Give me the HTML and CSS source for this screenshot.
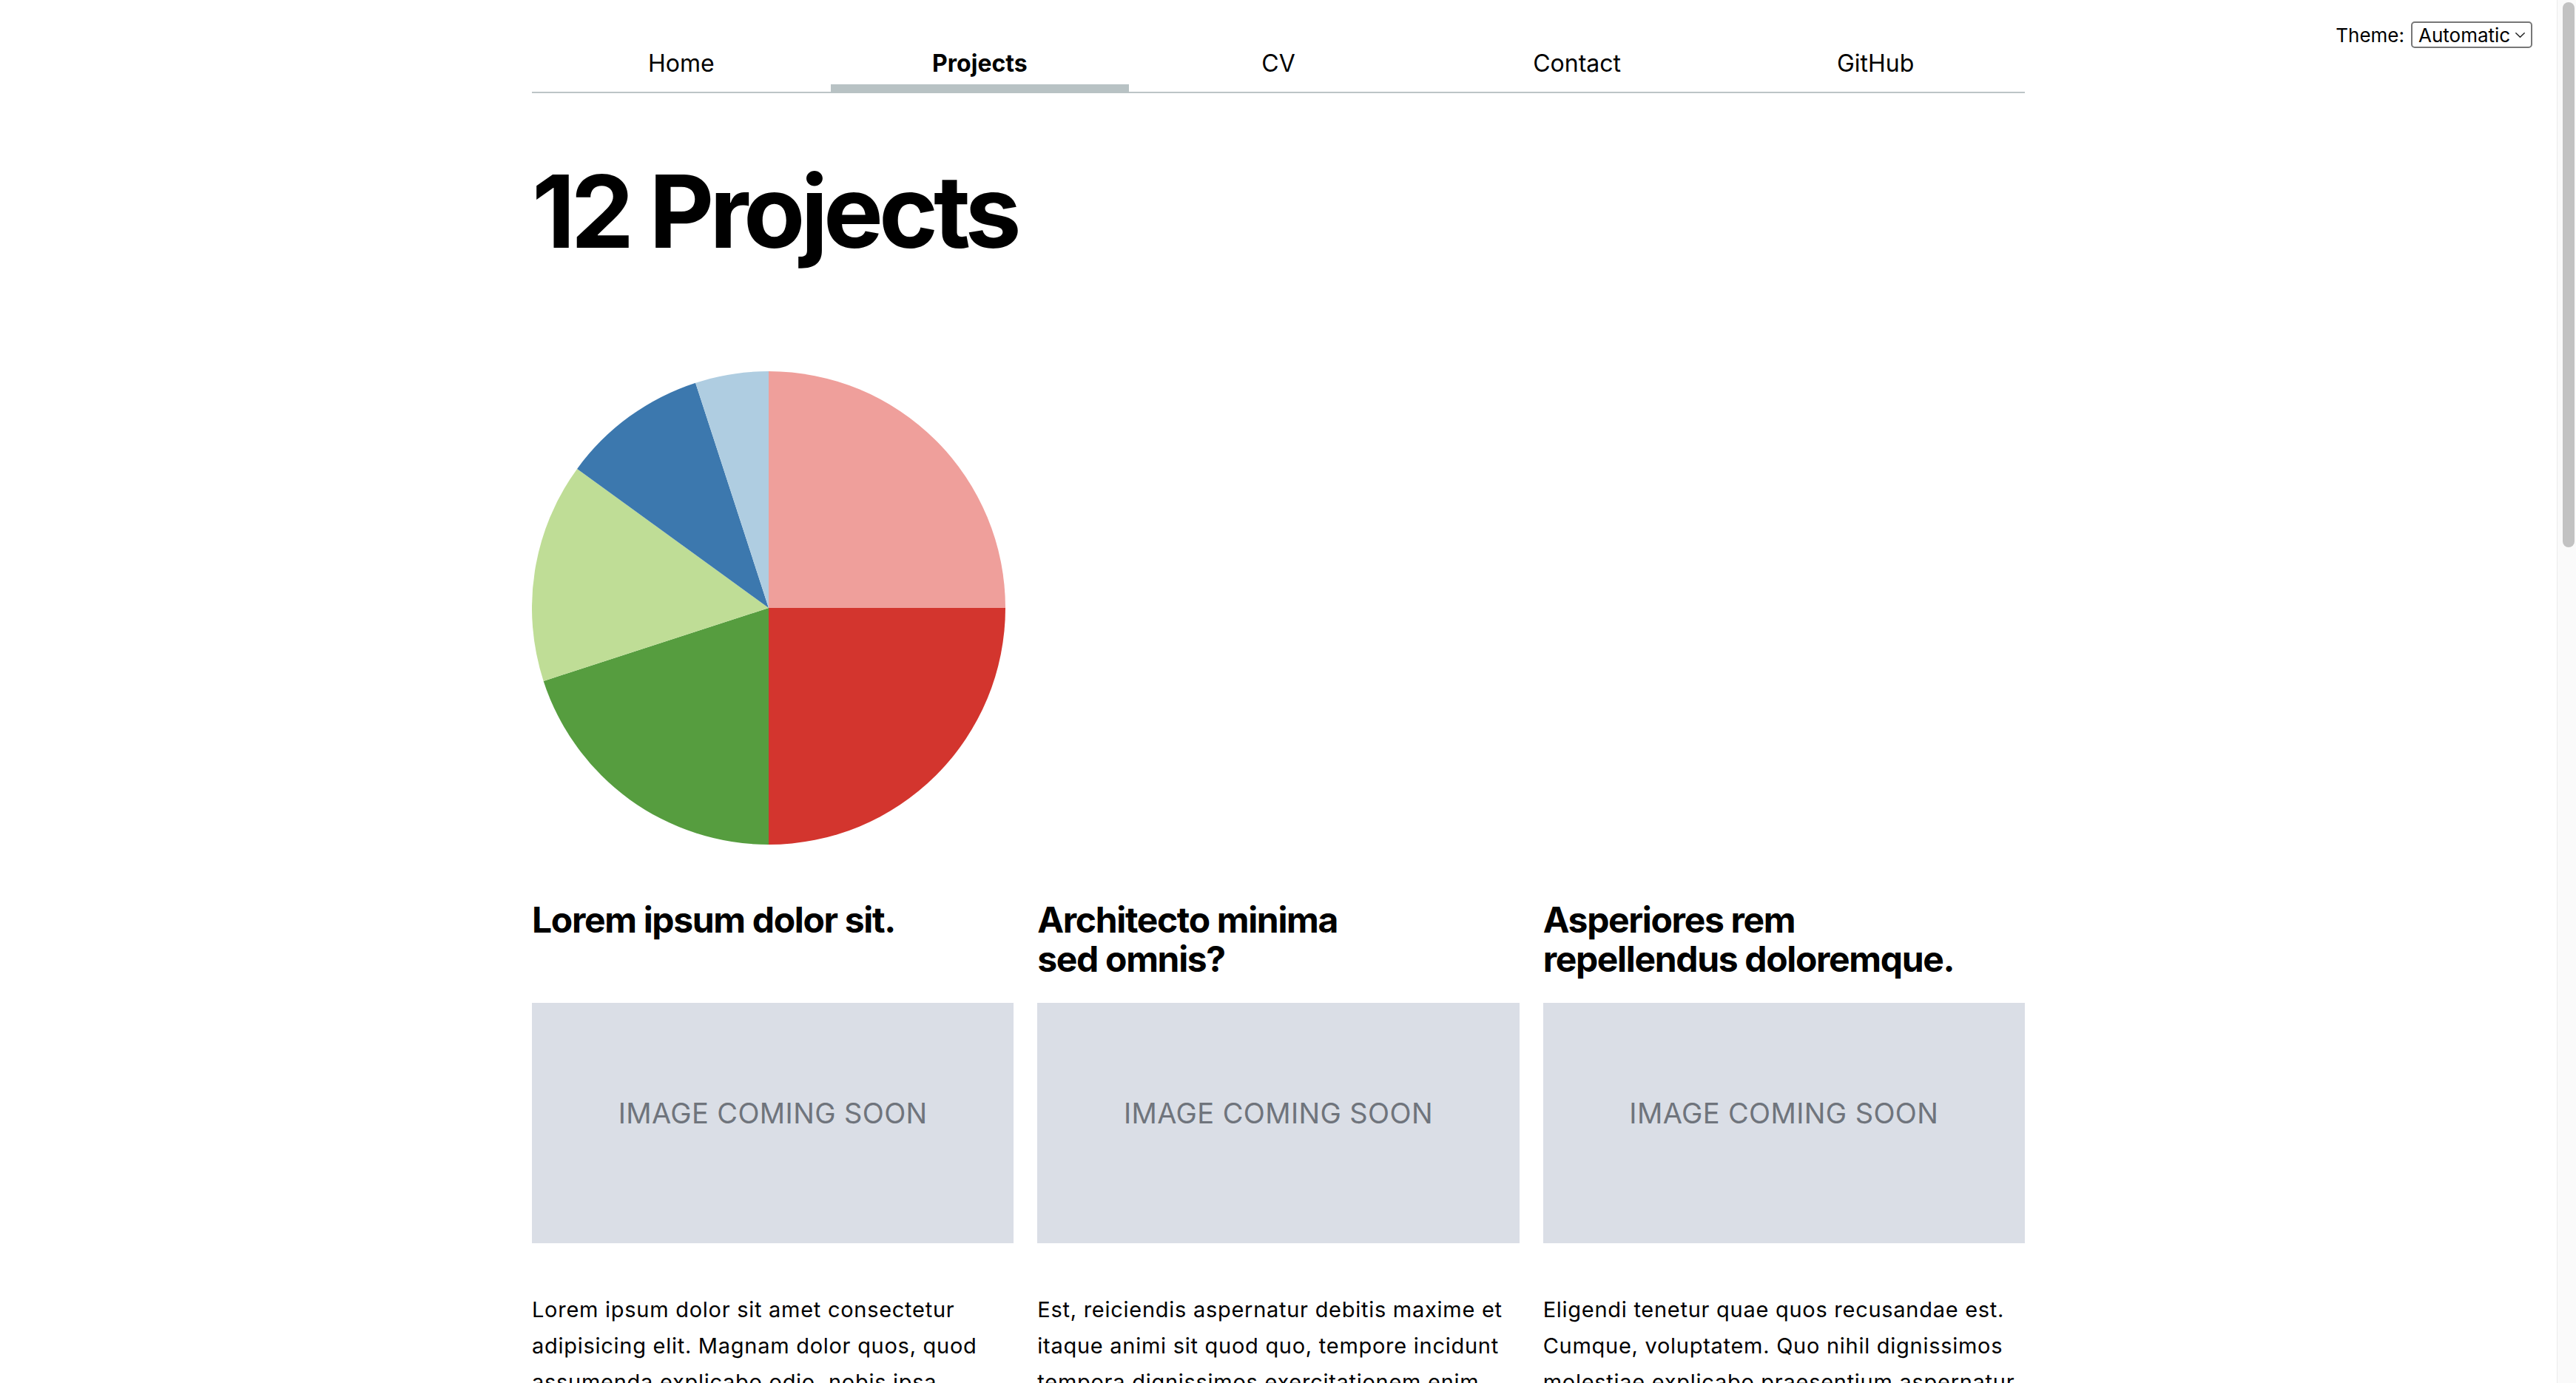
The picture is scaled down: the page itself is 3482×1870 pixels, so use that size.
FILE: index.html
```html
<!DOCTYPE html>
<html lang="en">
<head>
<meta charset="utf-8">
<title>Projects</title>
<link rel="stylesheet" href="styles.css">
</head>
<body>
<div class="page">
  <div class="theme">
    <label for="theme">Theme:</label>
    <span class="select-wrap">
      <select id="theme"><option>Automatic</option><option>Light</option><option>Dark</option></select>
      <svg class="chev" viewBox="0 0 13 7" aria-hidden="true"><path d="M0.8 0.8 L6.5 6.2 L12.2 0.8" fill="none" stroke="#222" stroke-width="1.5" stroke-linecap="round" stroke-linejoin="round"/></svg>
    </span>
  </div>
  <div class="container">
    <nav class="nav">
      <a href="#">Home</a>
      <a href="#" class="active">Projects</a>
      <a href="#">CV</a>
      <a href="#">Contact</a>
      <a href="#">GitHub</a>
    </nav>
    <h1 class="title">12 Projects</h1>
    <svg class="pie" viewBox="0 0 640 640" aria-label="Projects by year">
      <path d="M320 320 L320 0 A320 320 0 0 1 640 320 Z" fill="#ef9f9b"/>
      <path d="M320 320 L640 320 A320 320 0 0 1 320 640 Z" fill="#d3352e"/>
      <path d="M320 320 L320 640 A320 320 0 0 1 15.66 418.89 Z" fill="#569d3f"/>
      <path d="M320 320 L15.66 418.89 A320 320 0 0 1 61.11 131.91 Z" fill="#bfdd96"/>
      <path d="M320 320 L61.11 131.91 A320 320 0 0 1 221.11 15.66 Z" fill="#3c78ae"/>
      <path d="M320 320 L221.11 15.66 A320 320 0 0 1 320 0 Z" fill="#afcde1"/>
    </svg>
    <section class="cards">
      <article class="card">
        <h2 class="card-title">Lorem ipsum dolor sit.</h2>
        <div class="card-img">IMAGE COMING SOON</div>
        <p class="card-text">Lorem ipsum dolor sit amet consectetur adipisicing elit. Magnam dolor quos, quod assumenda explicabo odio, nobis ipsa laudantium quas eum veritatis ullam sint porro minima modi molestias doloribus cumque odit.</p>
      </article>
      <article class="card">
        <h2 class="card-title">Architecto minima sed omnis?</h2>
        <div class="card-img">IMAGE COMING SOON</div>
        <p class="card-text">Est, reiciendis aspernatur debitis maxime et itaque animi sit quod quo, tempore incidunt tempora dignissimos exercitationem enim voluptates, officiis nulla ratione cupiditate harum nesciunt.</p>
      </article>
      <article class="card">
        <h2 class="card-title">Asperiores rem repellendus doloremque.</h2>
        <div class="card-img">IMAGE COMING SOON</div>
        <p class="card-text">Eligendi tenetur quae quos recusandae est. Cumque, voluptatem. Quo nihil dignissimos molestiae explicabo praesentium aspernatur voluptas accusamus quidem, sapiente libero quas.</p>
      </article>
    </section>
  </div>
</div>
<div class="scrollbar"><div class="thumb"></div></div>
</body>
</html>
```

FILE: styles.css
```css
html {
  overflow: hidden;
}

body {
  margin: 0;
  display: flex;
  font-family: Inter, "Noto Sans", "Liberation Sans", sans-serif;
  color: #000;
  background: #fff;
}

.page {
  flex: 1;
  min-width: 0;
  position: relative;
}

.scrollbar {
  flex: none;
  width: 26px;
  height: 100vh;
  box-sizing: border-box;
  background: #fafafa;
  border-left: 1px solid #ebebeb;
}

.thumb {
  margin: 3px 2px 0 7px;
  height: 737px;
  background: #c2c2c2;
  border-radius: 8px;
}

.theme {
  position: absolute;
  top: 29px;
  right: 33px;
  display: flex;
  align-items: center;
  gap: 9px;
  font-size: 26px;
}

.select-wrap {
  position: relative;
  display: block;
}

.theme select {
  appearance: none;
  -webkit-appearance: none;
  display: block;
  font-family: inherit;
  font-size: 26px;
  color: #000;
  background: #fff;
  width: 164px;
  height: 36px;
  box-sizing: border-box;
  border: 2px solid #777;
  border-radius: 5px;
  padding: 0 0 0 8px;
  margin: 0;
}

.chev {
  position: absolute;
  right: 10px;
  top: 15px;
  width: 13px;
  height: 7px;
  pointer-events: none;
}

.container {
  width: 2018px;
  margin: 0 auto;
  padding-top: 66px;
}

.nav {
  display: flex;
  border-bottom: 2px solid #bcc4c6;
}

.nav a {
  flex: 1;
  text-align: center;
  font-size: 32px;
  line-height: 40px;
  padding-bottom: 8px;
  border-bottom: 12px solid transparent;
  margin-bottom: -2px;
  color: #000;
  text-decoration: none;
}

.nav a.active {
  font-weight: 700;
  border-bottom-color: #b8c2c4;
}

.title {
  font-size: 136px;
  line-height: 1.2;
  font-weight: 700;
  letter-spacing: -0.045em;
  margin: 78px 0 0;
}

.pie {
  display: block;
  width: 640px;
  height: 640px;
  margin-top: 135px;
}

.cards {
  display: grid;
  grid-template-columns: repeat(3, 1fr);
  column-gap: 32px;
  margin-top: 76px;
}

.card {
  display: grid;
  grid-row: span 3;
  grid-template-rows: subgrid;
  row-gap: 0;
}

.card-title {
  font-size: 48px;
  line-height: 1.1;
  font-weight: 700;
  letter-spacing: -0.028em;
  text-wrap: balance;
  margin: 0 0 32px;
}

.card-img {
  aspect-ratio: 2 / 1;
  box-sizing: border-box;
  padding-bottom: 28px;
  background: #dadee6;
  color: #6f747c;
  font-size: 38px;
  letter-spacing: 0.01em;
  display: flex;
  align-items: center;
  justify-content: center;
}

.card-text {
  font-size: 29px;
  line-height: 49px;
  letter-spacing: 0.025em;
  margin: 65px 0 0;
}
```
